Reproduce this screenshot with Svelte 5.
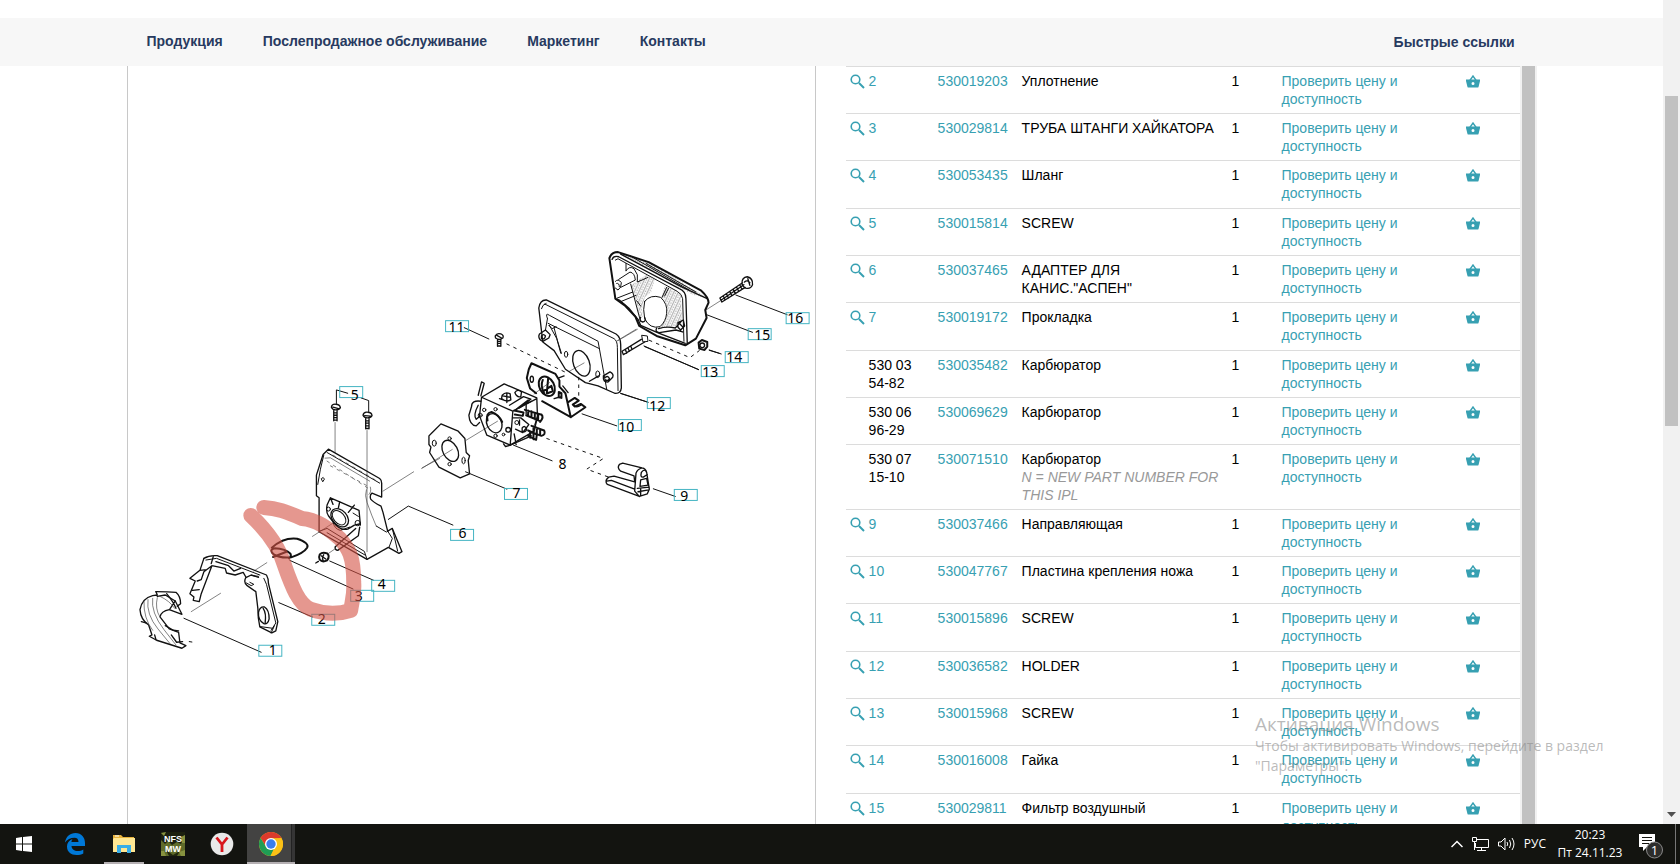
<script>
  const links = ["Продукция", "Послепродажное обслуживание", "Маркетинг", "Контакты"];

  const parts = [
    { pos: "2", number: "530019203", name: "Уплотнение" },
    { pos: "3", number: "530029814", name: "ТРУБА ШТАНГИ ХАЙКАТОРА" },
    { pos: "4", number: "530053435", name: "Шланг" },
    { pos: "5", number: "530015814", name: "SCREW" },
    { pos: "6", number: "530037465", name: 'АДАПТЕР ДЛЯ КАНИС."АСПЕН"' },
    { pos: "7", number: "530019172", name: "Прокладка" },
    { pos: "530 03 54-82", number: "530035482", name: "Карбюратор", plain: true },
    { pos: "530 06 96-29", number: "530069629", name: "Карбюратор", plain: true },
    {
      pos: "530 07 15-10",
      number: "530071510",
      name: "Карбюратор",
      note: "N = NEW PART NUMBER FOR THIS IPL",
      plain: true
    },
    { pos: "9", number: "530037466", name: "Направляющая" },
    { pos: "10", number: "530047767", name: "Пластина крепления ножа" },
    { pos: "11", number: "530015896", name: "SCREW" },
    { pos: "12", number: "530036582", name: "HOLDER" },
    { pos: "13", number: "530015968", name: "SCREW" },
    { pos: "14", number: "530016008", name: "Гайка" },
    { pos: "15", number: "530029811", name: "Фильтр воздушный" }
  ];

  // x, y: corner of the hotspot frame; tx, ty: middle and baseline of the number
  const hotspots = [
    { n: 1, x: 259, y: 647, tx: 273, ty: 657 },
    { n: 2, x: 312, y: 616, tx: 322, ty: 626 },
    { n: 3, x: 351, y: 592, tx: 359, ty: 603 },
    { n: 4, x: 372, y: 582, tx: 382, ty: 591 },
    { n: 5, x: 340, y: 388, tx: 355, ty: 401 },
    { n: 6, x: 451, y: 531, tx: 463, ty: 540 },
    { n: 7, x: 505, y: 490, tx: 517, ty: 500 },
    { n: 9, x: 675, y: 491, tx: 685, ty: 503 },
    { n: 10, x: 619, y: 421, tx: 627, ty: 433 },
    { n: 11, x: 446, y: 322, tx: 457, ty: 333 },
    { n: 12, x: 648, y: 399, tx: 658, ty: 412 },
    { n: 13, x: 702, y: 367, tx: 711, ty: 378 },
    { n: 14, x: 726, y: 353, tx: 735, ty: 363 },
    { n: 15, x: 749, y: 330, tx: 763, ty: 341 },
    { n: 16, x: 787, y: 314, tx: 796, ty: 324 }
  ];
</script>

<svelte:head>
  <title>Каталог запчастей</title>
</svelte:head>

<div class="screen">
  <div class="browser">
    <div class="page">
      <header>
        <div class="container bar">
          <nav>
            {#each links as link}
              <a href="#menu">{link}</a>
            {/each}
          </nav>
          <a class="quick" href="#quick">Быстрые ссылки</a>
        </div>
      </header>

      <main class="container">
        <section class="drawing">
          <svg viewBox="128 67 688 758" role="img" aria-label="Схема деталей">
            <defs>
              <pattern id="hatch" width="4" height="6" patternUnits="userSpaceOnUse" patternTransform="scale(2) rotate(-65)">
                <path d="M0 1H4M0 4H2" stroke="#444" stroke-width=".7" />
              </pattern>
            </defs>

            <!-- cover, gasket, adapter -->
            <g class="ink" transform="translate(120 380) scale(.33333)">
              <path d="M192 720L424 822M477 673L578 716M510 546L700 632M630 548L762 606M806 423L866 383L1000 440" />
              <path class="thin" d="M214 700L302 645M402 578L441 553M578 474L640 434M790 338L882 280M908 268L960 240" />
              <path d="M650 75V34L684 44M724 58L747 66V100" />
              <path class="thin" d="M646 132V222M742 156V520" />

              <path class="bold" d="M635 86Q636 76 648 77Q660 77 662 87Q658 94 648 94Q638 94 635 86ZM640 86L656 90M730 110Q732 99 744 101Q756 101 757 111Q753 118 743 118Q733 118 730 110ZM735 111L752 113" />
              <path class="bold" d="M642 96V127M652 96V127M642 103H652M642 110H652M642 117H652M642 125H652M738 120V151M748 120V151M738 127H748M738 134H748M738 142H748M738 150H748" />

              <path class="bold" d="M626 212L780 300Q787 305 786 318V356L757 344Q749 350 753 362Q760 371 784 383L790 402L804 458L818 450L847 520L838 525L806 507L742 543L598 460V358L590 352V290L610 228Z" />
              <path d="M612 230Q601 270 594 318M622 222L780 314M806 458L800 461L770 443M804 458L818 480L808 507M818 450L834 518" />
              <path class="thin" d="M616 239L632 238L750 308" />
              <path class="dash thin" d="M640 230L770 306M622 248L752 334M632 262L748 325" />
              <path d="M740 334Q734 350 742 372L756 410L770 444M752 326Q756 340 748 348" class="thin" />
              <path d="M605 302L609 310L614 302L611 298ZM600 458L622 450L734 519L742 543M622 463L736 530" />
              <path class="bold" d="M622 380L632 358L660 370L718 396L722 440M622 380Q618 400 626 412L640 430Q660 458 684 452L704 440L722 436M632 358L640 378M660 370L656 388M704 380L686 402" />
              <ellipse class="bold" cx="660" cy="418" rx="22" ry="31" transform="rotate(-42 660 418)" />
              <ellipse cx="658" cy="418" rx="16" ry="25" transform="rotate(-42 658 418)" />
              <circle cx="626" cy="392" r="6" /><circle cx="714" cy="434" r="8" />
              <path d="M640 432Q644 452 662 456L690 446M700 404L716 414" />
              <path class="bold" d="M708 450L646 506Q646 516 654 516L716 472L720 446" />

              <!-- hose clip and ring -->
              <path class="heavy" d="M456 508Q492 476 532 481Q570 494 562 508Q552 524 514 537Q480 540 462 528Q446 515 464 510Q498 512 512 526Q516 534 508 540M460 536L500 520" />
              <path class="heavy" d="M600 528Q608 520 622 525Q632 534 622 546Q608 553 600 544Q596 536 600 528Z" />
              <path class="bold" d="M604 532L618 542M612 529Q606 538 610 546M588 554L596 549" />
              <path class="thin" d="M625 526L648 510" />

              <!-- gasket -->
              <path class="bold" d="M252 540Q268 530 292 532L440 590Q446 600 446 616L474 730L468 758L456 764L420 746Q414 720 414 690L408 640L382 622Q370 612 378 598L394 590L416 597" />
              <path class="bold" d="M252 540L240 576L210 600L226 608L210 646L222 656L220 666L238 670L244 646L276 562L252 580L244 604L232 608M276 562L316 570L320 584L346 590L370 582L378 596M240 576L260 574M218 636L238 634M280 535L274 556M288 550L326 562L342 578L362 570" />
              <path d="M258 545L290 540L420 590M432 600L440 618L468 734L454 756M390 612L402 618L394 622L380 614M400 592L416 594M454 764L464 742M422 745L458 750" />
              <path class="bold" d="M416 702Q420 684 434 686Q448 694 448 722Q444 740 432 736Q414 726 416 702ZM430 690Q440 704 436 734" />

              <!-- cover -->
              <path class="bold" d="M108 640L112 650L98 652Q66 660 60 694Q62 724 86 740L96 770L88 774L110 786L186 810L198 802L180 794L176 762L148 752L120 716Q124 698 148 694L186 708L166 668L136 650L112 654" />
              <path class="bold" d="M108 640Q146 640 168 642Q182 654 182 676L172 684M140 646Q160 670 168 690M150 692L166 668M136 742L160 756L176 758M154 770L170 792L188 790M64 730L78 734M104 770L108 784" />
              <path class="thin" d="M72 668Q70 720 98 756M84 664Q78 708 114 752L150 796M98 660Q92 702 132 754L168 800M112 658Q104 692 120 716M120 654Q150 668 164 690" />
              <path class="dash" d="M208 790L220 792" />
            </g>

            <!-- carburettor group -->
            <g class="ink" transform="translate(420 300) scale(.33333)">
              <path d="M134 87L208 121M604 284L686 311M488 346L592 382M282 440L398 487M138 520L262 572M702 571L768 594M676 144L838 213M870 155L900 164" />
              <path class="thin" d="M6 510L98 453M140 425L234 368M344 286L390 252M450 218L494 193M594 126L650 92" />
              <path class="dash" d="M262 136L436 220M382 420L552 480L502 512L568 536M478 236V292M690 125L812 177L840 156" />

              <path class="bold" d="M227 112Q232 102 244 106Q254 110 250 118Q240 126 228 118ZM232 110L246 118M234 122V143M244 122V143M234 128H244M234 134H244M234 142H244" />

              <!-- gasket 7 -->
              <path class="bold" d="M64 376L116 398L136 420L140 462L150 472L146 486L150 526L122 538L58 506L30 462L34 446L28 438V412L38 402Z" />
              <ellipse class="bold" cx="92" cy="457" rx="22" ry="34" transform="rotate(-28 92 457)" />
              <ellipse cx="44" cy="434" rx="6" ry="9" /><ellipse cx="132" cy="486" rx="5" ry="10" />
              <circle cx="90" cy="420" r="5" /><circle cx="90" cy="497" r="5" />

              <!-- carburettor -->
              <path class="bold" d="M186 296L254 256L352 298L354 354L344 398L272 440L202 410L180 352ZM186 296L280 338L352 300M280 338L272 440" />
              <path class="bold" d="M176 290L186 250L194 254L184 292M184 308Q156 304 156 324L148 350Q150 380 170 382L180 372M176 320Q160 350 170 362L182 352" />
              <ellipse class="bold" cx="224" cy="374" rx="22" ry="30" transform="rotate(-25 224 374)" />
              <path class="heavy" d="M204 366Q198 344 216 340Q238 348 248 370" />
              <circle cx="194" cy="334" r="5" /><circle cx="182" cy="350" r="6" /><circle cx="228" cy="332" r="5" />
              <circle cx="266" cy="394" r="7" class="bold" /><circle cx="228" cy="412" r="5" /><circle cx="252" cy="408" r="4" />
              <path class="bold" d="M248 290Q258 278 272 286L274 304Q260 312 246 300ZM240 300L262 308M250 292L272 296M262 284V312M286 282Q294 270 306 280L304 294Q292 298 286 282ZM270 320L312 294L334 302L300 328M288 334L326 304M310 320L336 308M320 316V346" />
              <path class="heavy" d="M284 336L312 342L310 352L286 348M326 336V350M336 338V356M346 344V362M356 346V366M316 334L364 348M320 350L362 368M366 348Q374 356 362 370M342 384V404M352 388V406M362 392V410M336 382L374 396Q380 408 366 412L338 402M332 402V418M342 404V422M326 396L352 408L350 424L326 412" />
              <path class="bold" d="M280 358L304 358L328 378L310 402L288 392M300 364V380M308 388Q316 378 322 392Q318 404 308 398ZM272 440L286 434L336 412M284 406L290 438M252 436L258 444L274 440M354 354L346 380" />
              <circle cx="292" cy="372" r="6" />

              <!-- plate 10 -->
              <path class="heavy" d="M328 212L336 194L408 226L420 246V264L438 284L454 356L498 326L484 316L466 324L460 318L478 306L466 298L444 312M328 212L322 238L332 270L350 284M368 308L454 356" />
              <ellipse class="heavy" cx="382" cy="263" rx="22" ry="31" transform="rotate(-28 382 263)" />
              <path class="heavy" d="M370 244Q362 262 374 284M386 240L382 284M374 276L396 262L400 278L384 284" />
              <ellipse class="bold" cx="337" cy="242" rx="5" ry="9" /><path class="heavy" d="M418 280L426 284V298L418 296Z" /><path class="bold" d="M404 300L418 296M418 238L434 232" />
              <path class="bold" d="M462 318Q470 330 484 320M430 262L446 282" />

              <!-- holder 12 -->
              <path class="bold" d="M382 4L590 106Q604 116 604 138L606 268Q604 286 586 284L536 262L498 252L438 212L404 156L370 130L358 28Q362 2 382 4Z" />
              <path d="M376 16L584 120Q594 126 594 146L596 276M366 30Q368 18 380 14M384 60Q376 40 390 50L536 128L562 272M386 74L540 150M384 60L378 94M390 80L412 120L424 164M404 88L414 126L426 164M388 80L398 90L410 84" />
              <ellipse class="bold" cx="486" cy="194" rx="24" ry="40" transform="rotate(-20 486 194)" />
              <ellipse cx="440" cy="167" rx="5" ry="9" /><ellipse cx="535" cy="227" rx="6" ry="10" />
              <path class="bold" d="M360 106L378 94L392 108L388 118L370 128Q358 124 358 112ZM366 112Q372 104 378 112Q376 124 366 120ZM552 232L572 220Q584 226 580 236L566 250Q550 252 552 232ZM558 236Q566 230 570 240Q566 248 558 244M538 232L510 248" />

              <!-- guide 9 -->
              <path class="bold" d="M568 536L584 533L646 550L644 532L604 518Q592 508 600 498L610 494L668 508Q680 510 682 522L690 572L684 586L660 594L564 558Q554 548 568 536ZM562 548L576 546L646 572M668 508Q654 512 650 524L646 578L660 594M682 522Q676 508 666 522Q662 538 672 536L684 528M664 544L682 540L686 560L662 564ZM654 570L690 566M656 580L688 574M664 570V590" />
            </g>

            <!-- air filter housing -->
            <g class="ink" transform="translate(580 230) scale(.33333)">
              <path d="M470 199L624 258M382 258L520 311M390 364L426 376M194 352L358 423M124 495L206 521" />
              <path class="thin" d="M380 244L424 216M116 336L174 302" />
              <path fill="url(#hatch)" stroke="none" d="M154 170L200 138L226 152L216 190L196 206L188 240L190 266L180 262L168 210ZM256 172L304 194L308 276L290 292L232 302L246 290Q274 262 260 222L248 204Z" />
              <path fill="url(#hatch)" stroke="none" d="M120 72L210 100L384 208L340 198L308 180Z" />
              <path class="heavy" d="M90 88Q96 70 116 70L208 100L366 186Q388 206 388 222L378 244L382 268L350 330L318 350L232 322L180 292L168 264L136 230L108 210Z" />
              <path class="bold" d="M98 92Q102 80 118 84L300 180Q320 188 320 210L324 346M124 76L310 176L384 210M108 210L120 214L148 238L176 272L184 290L240 314L318 344" />
              <path d="M150 80L330 184M200 104L350 190M108 94L116 90L294 188Q308 196 310 210L314 338" />
              <path d="M140 104V126M140 126Q150 110 164 120L174 138V160L206 146M118 152L152 130Q166 132 168 154L124 176M108 158Q116 148 126 162Q126 178 116 184L108 178M112 164Q120 162 120 174M114 208L160 190M126 218L170 200M154 166L164 204L176 250L184 278M262 176L248 206M268 178L256 202M172 216L184 232" />
              <path d="M196 218Q214 196 244 206Q266 226 262 254Q260 278 242 294Q212 302 196 270Q190 242 196 218Z" fill="#fff" />
              <path class="bold" d="M232 298Q226 310 240 312L290 304L310 310M238 300Q260 292 288 298L308 276M296 282L312 274L316 292L304 304L296 296ZM302 286L310 294M184 266Q178 276 190 280Q202 278 196 266" />

              <path class="bold" d="M488 164Q488 146 504 144Q522 148 520 168Q514 182 500 178Q490 174 488 164ZM496 160Q504 152 512 162M506 150L512 170M422 208L490 162M428 220L498 176M422 208L428 220M432 202L438 214M442 196L448 208M452 189L458 201M462 182L468 194M472 175L478 187M482 169L488 181M426 214L494 168" />
              <path class="bold" d="M128 368L186 332M132 378L196 340M128 368L132 378M138 362L142 374M146 358L150 368M154 352L158 362" />
              <path d="M188 320L204 322L206 338L192 340Z" />
              <path class="heavy" d="M358 342L368 334L384 340V354L376 364L360 360Z" />
              <circle class="bold" cx="369" cy="350" r="7" />
            </g>

            {#each hotspots as spot}
              <rect class="spot" x={spot.x} y={spot.y} width="23" height="11" />
              <text class="callout" x={spot.tx} y={spot.ty}>{spot.n}</text>
            {/each}
            <text class="callout" x="563" y="471">8</text>

            <path class="marker" d="M251 517C267 532 280 550 285 568C292 588 299 606 311 611C325 616 339 616 351 612C352 604 355 596 354 584C354 558 349 550 340 540C328 530 317 521 302 520C286 513 277 510 264 509" />
          </svg>
        </section>

        <section class="parts">
          <table>
            <colgroup>
              <col class="c-icon" />
              <col class="c-pos" />
              <col class="c-number" />
              <col />
              <col class="c-qty" />
              <col class="c-check" />
              <col class="c-cart" />
            </colgroup>
            <tbody>
              {#each parts as part}
                <tr>
                  <td class="icon">
                    {#if !part.plain}
                      <svg width="15" height="15" viewBox="0 0 15 15" aria-hidden="true">
                        <circle cx="5.5" cy="5.5" r="4.3" fill="none" stroke="#37a0b2" stroke-width="1.6" />
                        <path d="M9 9L14 14" stroke="#37a0b2" stroke-width="2" />
                      </svg>
                    {/if}
                  </td>
                  <td class="pos">
                    {#if part.plain}{part.pos}{:else}<a href="#zoom">{part.pos}</a>{/if}
                  </td>
                  <td><a href="#part">{part.number}</a></td>
                  <td class="name">
                    {part.name}
                    {#if part.note}<em>{part.note}</em>{/if}
                  </td>
                  <td>1</td>
                  <td class="check"><a href="#price">Проверить цену и доступность</a></td>
                  <td>
                    <button class="cart" aria-label="В корзину">
                      <svg width="14" height="13" viewBox="0 0 14 13">
                        <path d="M3.500 6L7 1L10.500 6" fill="none" stroke="#37a0b2" stroke-width="1.4" />
                        <path fill="#37a0b2" fill-rule="evenodd" d="M0 4.500H14V6L12.500 12Q12.300 12.500 11.500 12.500H2.500Q1.700 12.500 1.500 12L0 6ZM7 7A1.500 1.500 0 1 0 7 10A1.500 1.500 0 1 0 7 7Z" />
                      </svg>
                    </button>
                  </td>
                </tr>
              {/each}
            </tbody>
          </table>
          <div class="inner-scroll"></div>
        </section>
      </main>
    </div>

    <div class="scrollbar">
      <div class="thumb"></div>
      <svg width="9" height="5" viewBox="0 0 9 5"><path d="M0 0H9L4.500 5Z" fill="#505050" /></svg>
    </div>
  </div>

  <div class="watermark">
    <strong>Активация Windows</strong>
    <span>Чтобы активировать Windows, перейдите в раздел<br />"Параметры".</span>
  </div>

  <footer class="taskbar">
    <button class="start" aria-label="Пуск">
      <svg width="16" height="16" viewBox="0 0 16 16" fill="#fff">
        <path d="M0 2L6 1V7.500H0ZM7 1L16 0V7.500H7ZM0 8.500H6V15L0 14ZM7 8.500H16V16L7 15Z" />
      </svg>
    </button>
    <div class="apps">
      <button aria-label="Edge">
        <svg width="22" height="22" viewBox="0 0 22 22">
          <path fill="#0078d7" d="M1 9.500C2 3.500 6 0 11.500 0C17.500 0 21 4.500 21 10V13H7.500C7.700 16.500 10.500 18 13.500 18C15.800 18 17.800 17.300 19.300 16.400V20.500C17.500 21.500 15 22 12.500 22C7 22 3 19 3 13.500C3 10 5 7.300 8.500 6C7.800 7 7.500 8 7.400 9H14.500C14.500 6.300 13 4.800 10.500 4.800C6.500 4.800 3 6.800 1 9.500Z" />
        </svg>
      </button>
      <button class="open" aria-label="Проводник">
        <svg width="22" height="20" viewBox="0 0 22 20">
          <path fill="#e8b33c" d="M0 1H8L10 3H21V18H0Z" />
          <path fill="#ffe793" d="M1 4H22V18H0V5Z" />
          <path fill="#38aee8" d="M4 11H18V19H14V14H8V19H4Z" />
          <path fill="#fff" d="M2 1.500H6V2.500H2Z" />
        </svg>
      </button>
      <button aria-label="NFS MW">
        <svg width="24" height="24" viewBox="0 0 24 24">
          <rect width="24" height="24" fill="#5f6b2a" />
          <path fill="#1c200f" d="M0 0H24V3L20 12L16 10L11 13L7 9L4 12L0 8Z" />
          <path fill="#87923f" d="M0 1L5 0L3 4ZM20 5L24 3V11H21ZM0 19H3L5 24H0ZM18 20L24 18V24H20Z" />
          <path fill="#22270f" d="M5 18L12 23L19 19L16 24H8Z" />
          <text x="12" y="10" class="nfs" font-style="italic">NFS</text>
          <text x="12" y="20" class="nfs">MW</text>
        </svg>
      </button>
      <button aria-label="Яндекс">
        <svg width="24" height="24" viewBox="0 0 24 24">
          <circle cx="12" cy="12" r="11.300" fill="#e9e9e9" />
          <path d="M6.500 5.500L12 12.500V20M17.500 5.500L12 12.500" fill="none" stroke="#d8151c" stroke-width="2.800" />
        </svg>
      </button>
      <button class="open active" aria-label="Chrome">
        <svg width="24" height="24" viewBox="0 0 24 24">
          <circle cx="12" cy="12" r="12" fill="#fbc116" />
          <path fill="#dc3a2c" d="M1.600 6A12 12 0 0 1 22.400 6L12 6.500L7 14.500Z" />
          <path fill="#1f9d55" d="M1.600 6L7.200 15L12 17.500L15 16.500L11.500 24A12 12 0 0 1 1.600 6Z" />
          <path fill="#fbc116" d="M12 6.500H22.700A12 12 0 0 1 11.500 24L16.500 15Z" />
          <circle cx="12" cy="12" r="6" fill="#fff" />
          <circle cx="12" cy="12" r="4.700" fill="#3b7ded" />
        </svg>
      </button>
    </div>

    <div class="tray">
      <svg width="12" height="8" viewBox="0 0 12 8" class="line"><path d="M.5 7L6 1.500L11.500 7" stroke-width="1.500" /></svg>
      <svg width="17" height="14" viewBox="0 0 17 14" class="line">
        <path d="M5 2.500H16.500V10.500H3.500V6M.5 .5H4.500V4.500H.5ZM2.500 4.500V13M9.500 10.500V13.500M5 13.500H14" />
      </svg>
      <svg width="17" height="14" viewBox="0 0 17 14" class="line">
        <path d="M.5 5H3L7 1V13L3 9H.5ZM9 5Q10.500 7 9 9M11.500 3Q14 7 11.500 11M14 1Q18 7 14 13" />
      </svg>
      <span class="lang">РУС</span>
      <div class="clock">
        <time>20:23</time>
        <time>Пт 24.11.23</time>
      </div>
      <button class="notice" aria-label="Уведомления">
        <svg width="25" height="25" viewBox="0 0 25 25">
          <path fill="#fff" d="M0 0H16V13H8L4 17V13H0Z" />
          <path d="M3 3.500H13M3 6.500H13M3 9.500H10" stroke="#15150f" />
          <circle cx="15.500" cy="16" r="8" fill="#2d2d2b" stroke="#8a8a8a" />
          <text x="15.500" y="21" class="count">1</text>
        </svg>
      </button>
    </div>
  </footer>
</div>

<style>
  :global(body) {
    margin: 0;
  }
  .screen {
    position: relative;
    display: flex;
    flex-direction: column;
    height: 100vh;
    overflow: hidden;
    background: #fff;
    color: #000;
    font: 14px/18px "Liberation Sans", Arial, sans-serif;
  }
  button {
    border: 0;
    padding: 0;
    background: none;
    font: inherit;
  }
  a {
    color: #37a0b2;
    text-decoration: none;
  }
  .browser {
    flex: 1;
    min-height: 0;
    display: flex;
    overflow: hidden;
  }
  .page {
    flex: 1;
    min-width: 0;
    display: flex;
    flex-direction: column;
    padding-top: 18px;
  }
  .container {
    box-sizing: border-box;
    width: 100%;
    max-width: 1410px;
    margin: 0 auto;
  }

  header {
    background: #f7f7f7;
  }
  .bar {
    display: flex;
    justify-content: space-between;
    align-items: center;
    height: 48px;
    padding: 0 22px 2px 20px;
  }
  nav {
    display: flex;
    gap: 40px;
  }
  .bar a {
    color: #273a60;
    font-weight: bold;
  }
  .bar .quick {
    padding-top: 2px;
  }

  main {
    flex: 1;
    min-height: 0;
    display: flex;
    gap: 30px;
    overflow: hidden;
  }
  .drawing {
    box-sizing: border-box;
    flex: 1;
    min-width: 0;
    border: 1px solid #c8c8c8;
    border-width: 0 1px;
  }
  .drawing svg {
    display: block;
    width: 100%;
  }
  .ink {
    fill: none;
    stroke: #111;
    stroke-width: 3;
    stroke-linejoin: round;
    stroke-linecap: round;
  }
  .ink .bold {
    stroke-width: 4;
  }
  .ink .heavy {
    stroke-width: 6;
  }
  .ink .dash {
    stroke-dasharray: 8 15;
  }
  .ink .thin {
    stroke-width: 2;
    stroke: #444;
  }
  .spot {
    fill: none;
    stroke: #45b5c3;
  }
  .callout {
    font: 14px "Noto Sans", sans-serif;
    text-anchor: middle;
  }
  .marker {
    fill: none;
    stroke: rgba(212, 82, 68, 0.6);
    stroke-width: 15;
    stroke-linecap: round;
    stroke-linejoin: round;
  }

  .parts {
    width: 49%;
    display: flex;
    align-items: flex-start;
  }
  table {
    flex: 1;
    table-layout: fixed;
    border-collapse: separate;
    border-spacing: 0;
  }
  .c-icon {
    width: 23px;
  }
  .c-pos {
    width: 69px;
  }
  .c-number {
    width: 84px;
  }
  .c-qty {
    width: 50px;
  }
  .c-check {
    width: 184px;
  }
  .c-cart {
    width: 54px;
  }
  tr {
    height: 47px;
  }
  tr:nth-child(3n) {
    height: 48px;
  }
  td {
    padding: 5px 0;
    border-top: 1px solid #dcdcdc;
    vertical-align: top;
  }
  .icon {
    padding-left: 4px;
  }
  .icon svg {
    display: block;
    margin-top: 2px;
  }
  .pos {
    padding-right: 12px;
  }
  .name {
    padding-right: 8px;
  }
  .check {
    padding-right: 40px;
  }
  em {
    display: block;
    color: #999;
  }
  .cart {
    display: block;
    margin-top: 3px;
  }
  .cart svg {
    display: block;
  }
  .inner-scroll {
    align-self: stretch;
    width: 13px;
    border: 2px solid #f1f1f1;
    border-width: 0 2px;
    background: #c1c1c1;
  }

  .scrollbar {
    display: flex;
    flex-direction: column;
    align-items: center;
    justify-content: space-between;
    width: 17px;
    background: #f1f1f1;
  }
  .thumb {
    width: 13px;
    height: 40%;
    margin-top: 96px;
    background: #c1c1c1;
  }
  .scrollbar svg {
    margin-bottom: 7px;
  }

  .watermark {
    position: absolute;
    right: 0;
    bottom: 88px;
    width: 425px;
    color: rgba(140, 140, 140, 0.6);
    font: 14px/20px "Open Sans", sans-serif;
    pointer-events: none;
  }
  .watermark strong {
    display: block;
    font-size: 19px;
    line-height: 24px;
    font-weight: normal;
  }

  .taskbar {
    flex: none;
    display: flex;
    justify-content: space-between;
    height: 40px;
    background: #131410;
    color: #fff;
    font: 12px/18px "Open Sans", sans-serif;
  }
  .taskbar button {
    display: flex;
    align-items: center;
    justify-content: center;
  }
  .start,
  .apps button {
    width: 48px;
    height: 40px;
  }
  .apps {
    flex: 1;
    display: flex;
    gap: 1px;
    margin-left: 3px;
  }
  .apps .open {
    background: linear-gradient(#b5b0b3, #b5b0b3) center bottom / 40px 2px no-repeat;
  }
  .apps .active {
    background:
      linear-gradient(#b5b0b3, #b5b0b3) left bottom / 48px 2px no-repeat,
      linear-gradient(90deg, #434342 44px, #222 44px, #222 45px, #353535 45px);
  }
  .nfs {
    fill: #fff;
    font: bold 9px "Liberation Sans", sans-serif;
    text-anchor: middle;
  }
  .tray {
    display: flex;
    align-items: center;
    margin-right: 4px;
    padding-right: 11px;
    border-right: 1px solid #777;
    gap: 9px;
  }
  .line {
    fill: none;
    stroke: #fff;
  }
  .clock {
    display: flex;
    flex-direction: column;
    align-items: center;
    width: 66px;
    margin: 0 2px;
  }
  .notice {
    margin: 4px 0 0 5px;
  }
  .count {
    fill: #fff;
    font: 13px "Open Sans", sans-serif;
    text-anchor: middle;
  }
</style>
